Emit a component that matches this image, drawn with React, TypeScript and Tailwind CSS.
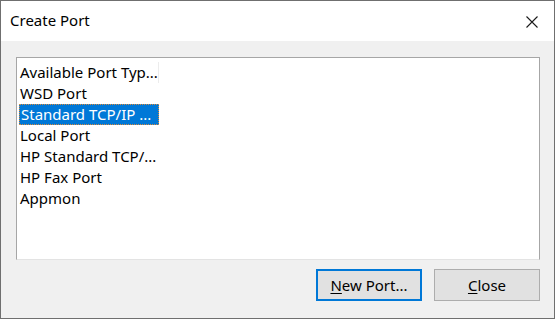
const ports = [
    "Available Port Typ...",
    "WSD Port",
    "Standard TCP/IP ...",
    "Local Port",
    "HP Standard TCP/...",
    "HP Fax Port",
    "Appmon",
];

const selected = 2;

function Button({label, hot, focused}: {label: string; hot: string; focused?: boolean}) {
    return (
        <button
            className={`w-[106px] h-[32px] bg-[#e1e1e1] text-[15px] text-black ${
                focused ? "border-2 border-[#0078d7]" : "border border-[#adadad]"
            }`}
        >
            <span className="underline underline-offset-2">{hot}</span>
            {label.slice(1)}
        </button>
    );
}

export default function App() {
    return (
        <div className="w-[555px] h-[319px] border border-[#6f6f6f] bg-[#f0f0f0] flex flex-col font-['Segoe_UI','Noto_Sans',sans-serif] text-black">
            <div className="h-[40px] bg-white flex items-center justify-between pl-[9px] pr-[16px]">
                <span className="text-[15px] -mt-[1px]">Create Port</span>
                <svg width="12" height="12" viewBox="0 0 12 12" className="mt-[1px]">
                    <path d="M0.5 0.5 L11.5 11.5 M11.5 0.5 L0.5 11.5" stroke="#1a1a1a" strokeWidth="1.1"/>
                </svg>
            </div>
            <div className="flex-1 pl-[15px] pr-[14px] pt-[16px]">
                <div className="h-[203px] bg-white border border-[#a6a6a6] border-b-[#e3e3e3] pt-[4px] pl-[2px]">
                    {ports.map((p, i) => (
                        <div
                            key={p}
                            className={`w-[140px] h-[21px] flex items-center pl-[1px] text-[15px] leading-none whitespace-nowrap ${
                                i === selected
                                    ? "bg-[#0078d7] text-white border border-dotted border-[#d98a3c]"
                                    : i === 0
                                        ? "border-r border-[#ececec]"
                                        : ""
                            }`}
                        >
                            {p}
                        </div>
                    ))}
                </div>
                <div className="flex justify-end gap-[12px] mt-[9px] pr-0">
                    <Button label="New Port..." hot="N" focused/>
                    <Button label="Close" hot="C"/>
                </div>
            </div>
        </div>
    );
}
